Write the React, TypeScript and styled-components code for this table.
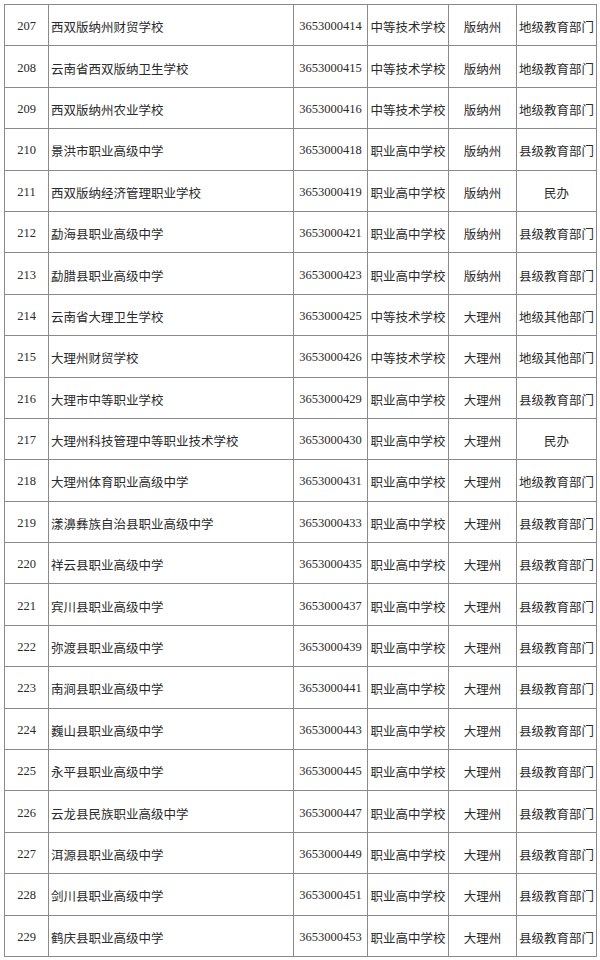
import React from 'react'
import styled, { createGlobalStyle } from 'styled-components'

const GlobalStyle = createGlobalStyle`
  * {
    box-sizing: border-box;
  }
  html, body {
    margin: 0;
    padding: 0;
    background: #fff;
  }
`

const Page = styled.div`
  padding: 4px 4px;
  width: 600px;
`

const Table = styled.table`
  width: 592px;
  border-collapse: collapse;
  table-layout: fixed;
  font-family: 'Liberation Serif', 'Noto Sans CJK SC', serif;
  font-size: 12.5px;
  color: #2a2a2a;
`

const Row = styled.tr`
  height: 41.4px;
`

type Align = 'left' | 'center'

const Cell = styled.td<{ $align?: Align }>`
  border: 1px solid #8a8a8a;
  padding: 3px 0 0 ${({ $align }) => ($align === 'left' ? '2px' : '0')};
  text-align: ${({ $align }) => $align ?? 'center'};
  vertical-align: middle;
  white-space: nowrap;
  overflow: hidden;
`

type School = [number, string, string, string, string, string]

const schools: School[] = [
  [207, '西双版纳州财贸学校', '3653000414', '中等技术学校', '版纳州', '地级教育部门'],
  [208, '云南省西双版纳卫生学校', '3653000415', '中等技术学校', '版纳州', '地级教育部门'],
  [209, '西双版纳州农业学校', '3653000416', '中等技术学校', '版纳州', '地级教育部门'],
  [210, '景洪市职业高级中学', '3653000418', '职业高中学校', '版纳州', '县级教育部门'],
  [211, '西双版纳经济管理职业学校', '3653000419', '职业高中学校', '版纳州', '民办'],
  [212, '勐海县职业高级中学', '3653000421', '职业高中学校', '版纳州', '县级教育部门'],
  [213, '勐腊县职业高级中学', '3653000423', '职业高中学校', '版纳州', '县级教育部门'],
  [214, '云南省大理卫生学校', '3653000425', '中等技术学校', '大理州', '地级其他部门'],
  [215, '大理州财贸学校', '3653000426', '中等技术学校', '大理州', '地级其他部门'],
  [216, '大理市中等职业学校', '3653000429', '职业高中学校', '大理州', '县级教育部门'],
  [217, '大理州科技管理中等职业技术学校', '3653000430', '职业高中学校', '大理州', '民办'],
  [218, '大理州体育职业高级中学', '3653000431', '职业高中学校', '大理州', '地级教育部门'],
  [219, '漾濞彝族自治县职业高级中学', '3653000433', '职业高中学校', '大理州', '县级教育部门'],
  [220, '祥云县职业高级中学', '3653000435', '职业高中学校', '大理州', '县级教育部门'],
  [221, '宾川县职业高级中学', '3653000437', '职业高中学校', '大理州', '县级教育部门'],
  [222, '弥渡县职业高级中学', '3653000439', '职业高中学校', '大理州', '县级教育部门'],
  [223, '南涧县职业高级中学', '3653000441', '职业高中学校', '大理州', '县级教育部门'],
  [224, '巍山县职业高级中学', '3653000443', '职业高中学校', '大理州', '县级教育部门'],
  [225, '永平县职业高级中学', '3653000445', '职业高中学校', '大理州', '县级教育部门'],
  [226, '云龙县民族职业高级中学', '3653000447', '职业高中学校', '大理州', '县级教育部门'],
  [227, '洱源县职业高级中学', '3653000449', '职业高中学校', '大理州', '县级教育部门'],
  [228, '剑川县职业高级中学', '3653000451', '职业高中学校', '大理州', '县级教育部门'],
  [229, '鹤庆县职业高级中学', '3653000453', '职业高中学校', '大理州', '县级教育部门'],
]

const columnWidths = [44, 245, 74, 81, 68, 80]

export default function App(): JSX.Element {
  return (
    <Page>
      <GlobalStyle />
      <Table>
        <colgroup>
          {columnWidths.map((w, i) => (
            <col key={i} style={{ width: w }} />
          ))}
        </colgroup>
        <tbody>
          {schools.map(([no, name, code, kind, region, dept]) => (
            <Row key={no}>
              <Cell>{no}</Cell>
              <Cell $align="left">{name}</Cell>
              <Cell>{code}</Cell>
              <Cell>{kind}</Cell>
              <Cell>{region}</Cell>
              <Cell>{dept}</Cell>
            </Row>
          ))}
        </tbody>
      </Table>
    </Page>
  )
}
